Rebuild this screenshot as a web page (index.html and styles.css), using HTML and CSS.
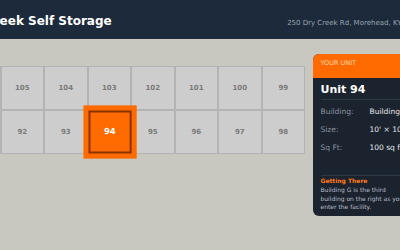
FILE: index.html
```html
<!DOCTYPE html>
<html>

<head>
	<meta http-equiv="Content-Type" content="text/html; charset=UTF-8">
	<title>Dry Creek Self Storage - Unit 94</title>
	<link rel="stylesheet" href="styles.css">
</head>

<body>
	<div class="page">
		<div class="header">
			<h1 class="title">Dry Creek Self Storage</h1>
			<div class="address">250 Dry Creek Rd, Morehead, KY 40351</div>
		</div>

		<div class="main">
			<!-- building G: top row counts down, bottom row counts up -->
			<div class="units">
				<div class="unit">106</div>
				<div class="unit">105</div>
				<div class="unit">104</div>
				<div class="unit">103</div>
				<div class="unit">102</div>
				<div class="unit">101</div>
				<div class="unit">100</div>
				<div class="unit">99</div>
				<div class="unit">91</div>
				<div class="unit">92</div>
				<div class="unit">93</div>
				<div class="unit selected">94</div>
				<div class="unit">95</div>
				<div class="unit">96</div>
				<div class="unit">97</div>
				<div class="unit">98</div>
			</div>

			<div class="panel">
				<div class="panel-head">YOUR UNIT</div>
				<div class="panel-body">
					<div class="unit-name">Unit 94</div>
					<div class="facts">
						<div class="label">Building:</div>
						<div class="value">Building G</div>
						<div class="label">Size:</div>
						<div class="value">10' × 10'</div>
						<div class="label">Sq Ft:</div>
						<div class="value">100 sq ft</div>
					</div>
					<div class="directions">
						<div class="directions-title">Getting There</div>
						<p>Building G is the third building on the right as you enter the facility.</p>
					</div>
				</div>
			</div>
		</div>
	</div>
</body>

</html>
```

FILE: styles.css
```css
* {
	margin: 0;
	padding: 0;
	box-sizing: border-box;
}

body {
	background: #c9c8c0;
	font-family: "DejaVu Sans", "Noto Sans", sans-serif;
	overflow: hidden;
}

/* page is wider than the window, scrolled a bit to the right */
.page {
	width: 503px;
	margin-left: -60px;
}

.header {
	height: 39px;
	background: #1c2a3b;
	display: flex;
	align-items: baseline;
	padding: 14px 17px 0;
}

.title {
	font-size: 12px;
	font-weight: bold;
	color: #fff;
	line-height: 14px;
}

.address {
	margin-left: auto;
	font-size: 7px;
	color: #9aa5b1;
}

.main {
	display: flex;
	align-items: flex-start;
	gap: 7.5px;
	padding: 15px 17px;
}

.units {
	margin-top: 12px;
	display: grid;
	grid-template-columns: repeat(8, 43.5px);
	grid-auto-rows: 44px;
}

.unit {
	background: #cdcdcd;
	border: 1px solid #b3b3b3;
	display: flex;
	align-items: center;
	justify-content: center;
	font-size: 7px;
	font-weight: bold;
	color: #7a7a7a;
}

.unit.selected {
	position: relative;
	z-index: 1;
	transform: scale(1.2);
	background: #ff6b00;
	border-color: #ff6b00;
	box-shadow: inset 0 0 0 3px #ff6b00, inset 0 0 0 4.7px #8a3300;
	color: #fff;
}

.panel {
	width: 104px;
	flex-shrink: 0;
	background: #1b232e;
	border-radius: 6px;
	overflow: hidden;
}

.panel-head {
	height: 24px;
	background: #ff6b00;
	padding: 5px 8px 0;
	font-size: 6.5px;
	color: #ffd5b0;
}

.panel-body {
	padding: 0 8px 4px;
}

.unit-name {
	font-size: 11px;
	font-weight: bold;
	color: #fff;
	line-height: 13px;
	padding: 5px 0 3px;
	border-bottom: 1px solid #2e3947;
}

.facts {
	display: grid;
	grid-template-columns: 49px 1fr;
	grid-auto-rows: 18px;
	align-items: center;
	padding-top: 2px;
	font-size: 7.5px;
	white-space: nowrap;
}

.label {
	color: #8b95a1;
}

.value {
	color: #e4e7eb;
}

.directions {
	margin-top: 19px;
	border-top: 1px solid #2e3947;
	padding-top: 1.3px;
	font-size: 6px;
	line-height: 8.7px;
}

.directions-title {
	font-weight: bold;
	color: #ff7a1a;
}

.directions p {
	color: #b8bfc7;
}
```
